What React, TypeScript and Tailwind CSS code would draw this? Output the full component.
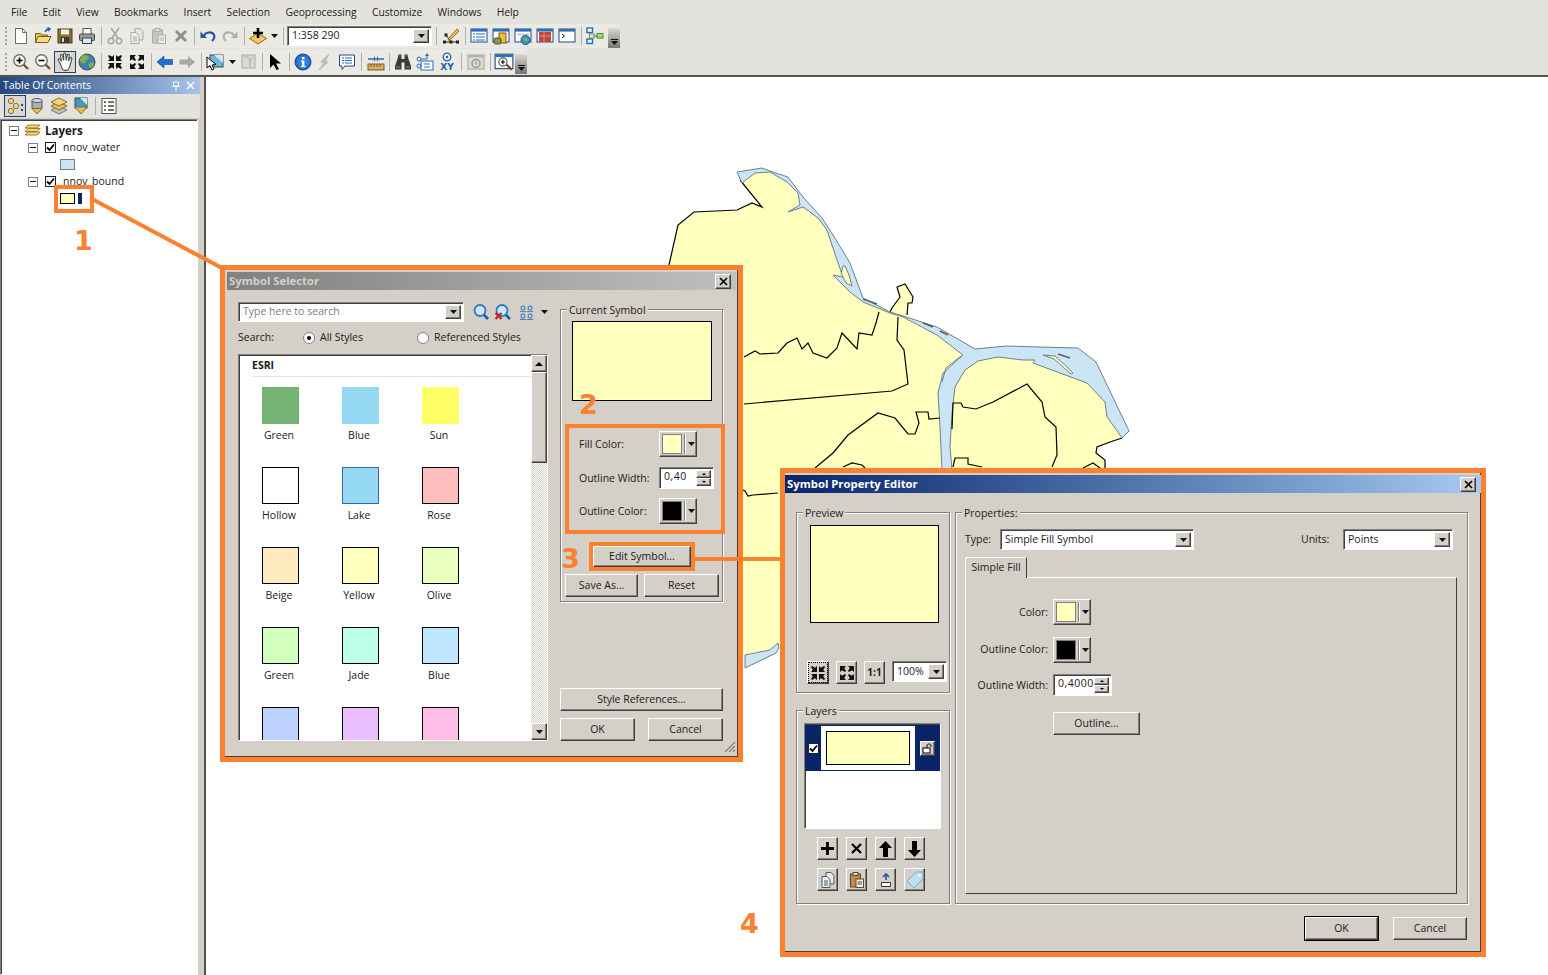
import type { ReactNode } from 'react';

const raised = 'border border-t-white border-l-white border-r-[#404040] border-b-[#404040] shadow-[inset_-1px_-1px_0_#808080]';
const sunken = 'border border-t-[#808080] border-l-[#808080] border-r-white border-b-white shadow-[inset_1px_1px_0_#404040]';

const Svg = ({ children, size = 18 }: { children: ReactNode; size?: number }) => (
  <svg width={size} height={size} viewBox="0 0 18 18" fill="none">{children}</svg>
);

const Caret = () => (
  <svg className="shrink-0" width="7" height="4" viewBox="0 0 7 4"><polygon points="0,0 7,0 3.5,4" fill="#111" /></svg>
);

// toolbar icons
const DocIcon = () => <Svg><path d="M3.5 1.5h7l4 4v11h-11z" fill="#fff" stroke="#6b6b6b" /><path d="M10.5 1.5v4h4" stroke="#6b6b6b" /></Svg>;
const OpenIcon = () => <Svg><path d="M1.5 6.5h5l1 1.5h6v7.5h-12z" fill="#e9c35c" stroke="#7c5d12" /><path d="M1.5 15.5l2.5-6h13l-3 6z" fill="#f5da84" stroke="#7c5d12" /><path d="M11 5c1-2.5 2.5-3 4-3M13.5 0.5l2.5 1.5-2 2" stroke="#245fa8" strokeWidth="1.5" /></Svg>;
const SaveIcon = () => <Svg><rect x="2" y="2" width="14" height="14" fill="#8a7130" stroke="#4b3c14" /><rect x="5" y="2.5" width="8" height="5" fill="#f2efe3" /><rect x="4.5" y="10" width="9" height="6" fill="#3d3a33" /><rect x="6" y="11" width="2" height="4" fill="#d8d8d8" /></Svg>;
const PrintIcon = () => <Svg><rect x="5" y="1.5" width="8" height="6" fill="#fff" stroke="#555" /><rect x="1.5" y="7" width="15" height="6.5" rx="1" fill="#9a9a9a" stroke="#444" /><rect x="4.5" y="11" width="9" height="5.5" fill="#dceaf7" stroke="#345" /></Svg>;
const CutIcon = () => <Svg><path d="M5 1l7 10M13 1L6 11" stroke="#a6a6a2" strokeWidth="1.6" /><circle cx="5" cy="14" r="2.7" stroke="#a6a6a2" strokeWidth="1.5" /><circle cx="13" cy="14" r="2.7" stroke="#a6a6a2" strokeWidth="1.5" /></Svg>;
const CopyIcon = ({ color = '#a9a9a5' }: { color?: string }) => <Svg><path d="M7 1.5h5l3 3v8.5H7z" fill="#e8e6e1" stroke={color} /><path d="M3 5.5h5l3 3v8H3z" fill="#f1f0ec" stroke={color} /><path d="M5 10h4M5 12h4M5 14h4" stroke={color} /></Svg>;
const PasteIcon = ({ color = '#a9a9a5', board = '#c9c7c2' }: { color?: string; board?: string }) => <Svg><rect x="2.5" y="3" width="10" height="13" fill={board} stroke={color} /><rect x="5" y="1.5" width="5" height="3" fill="#e0ded9" stroke={color} /><rect x="8" y="8" width="7.5" height="8.5" fill="#f1f0ec" stroke={color} /><path d="M9.5 11h4.5M9.5 13h4.5" stroke={color} /></Svg>;
const DelIcon = () => <Svg><path d="M4 4l10 10M14 4L4 14" stroke="#8f8f8c" strokeWidth="3" /></Svg>;
const UndoIcon = () => <Svg><path d="M5 9c1-4 8-5 10-1 1 2 0 4-2 6" stroke="#1f5aa6" strokeWidth="2.2" /><polygon points="1.5,4.5 8,11 1.5,11" fill="#1f5aa6" /></Svg>;
const RedoIcon = () => <Svg><path d="M13 9c-1-4-8-5-10-1-1 2 0 4 2 6" stroke="#b0b0ac" strokeWidth="2.2" /><polygon points="16.5,4.5 10,11 16.5,11" fill="#b0b0ac" /></Svg>;
const AddDataIcon = () => <Svg><polygon points="9,6 17.5,11.5 9,17 0.5,11.5" fill="#efc765" stroke="#8a6a1d" /><path d="M9 1v10M4 6h10" stroke="#000" strokeWidth="2.6" /></Svg>;
const EditorIcon = () => <Svg><path d="M2 15h14M9 15L4 8" stroke="#222" /><rect x="1" y="13.5" width="3" height="3" fill="#222" /><rect x="7.5" y="13.5" width="3" height="3" fill="#222" /><rect x="14" y="13.5" width="3" height="3" fill="#222" /><rect x="2.5" y="6.5" width="3" height="3" fill="#222" /><path d="M7 11l8-9 2 2-8 8-3 1z" fill="#f1c25b" stroke="#9a6a12" /></Svg>;
const WindowBase = ({ children }: { children?: ReactNode }) => <><rect x="1" y="2" width="16" height="13" fill="#fff" stroke="#1d4a86" /><rect x="1" y="2" width="16" height="2.6" fill="#2d6fb8" /><>{children}</></>;
const TocWin = () => <Svg><WindowBase><path d="M3 7h2M6 7h9M3 10h2M6 10h9M3 13h2M6 13h9" stroke="#2b6cb8" /></WindowBase></Svg>;
const CatalogWin = () => <Svg><WindowBase><rect x="7" y="6" width="7" height="10" fill="#f0c030" stroke="#7c5d12" /><rect x="2" y="11" width="7" height="6" rx="2" fill="#8f9c3a" stroke="#445" /></WindowBase></Svg>;
const SearchWin = () => <Svg><WindowBase><rect x="3" y="6.5" width="12" height="2" fill="#c9c9c9" /><circle cx="11.5" cy="13" r="4.5" fill="#3d8ec9" stroke="#23577d" /><path d="M9 12c1.5-2 3-1 4 0s1 2-1 3z" fill="#6dbb4a" /></WindowBase></Svg>;
const BoxWin = () => <Svg><WindowBase><rect x="3" y="5" width="12" height="10" fill="#c0453a" /><path d="M3 9h12M8 5v10" stroke="#e88f85" /></WindowBase></Svg>;
const CmdWin = () => <Svg><WindowBase><path d="M4 7l2.5 2L4 11" stroke="#111" /></WindowBase></Svg>;
const ModelIcon = () => <Svg><rect x="1" y="1" width="5.5" height="4.5" fill="#ffd" stroke="#1d6fb8" strokeWidth="1.4" /><rect x="1" y="12" width="5.5" height="4.5" fill="#dff" stroke="#1d6fb8" strokeWidth="1.4" /><rect x="3.5" y="7" width="4.5" height="4" fill="#ee9" stroke="#888" /><rect x="11" y="6.5" width="6" height="4.5" fill="#9fdc6c" stroke="#4d8a25" /><path d="M3.7 5.5V7M3.7 11v1M8 9h3" stroke="#1d6fb8" /></Svg>;
const ZoomGlass = ({ plus }: { plus: boolean }) => <Svg><path d="M11 11l5 5" stroke="#8a4a2a" strokeWidth="2.4" /><circle cx="7.5" cy="7.5" r="5.7" fill="#fff" stroke="#6b6b6b" strokeWidth="1.4" /><path d="M4.5 7.5h6" stroke="#000" strokeWidth="1.6" />{plus && <path d="M7.5 4.5v6" stroke="#000" strokeWidth="1.6" />}</Svg>;
const HandIcon = () => <Svg size={20}><path d="M5 11L3 7.5c-.7-1.2.8-2 1.6-.9L6 8.5 4.8 3.5c-.3-1.3 1.4-1.7 1.8-.5l1.2 4.5L7.8 2c0-1.4 1.8-1.4 1.9 0l.4 5.5 1-4.6c.3-1.3 1.9-1 1.7.3l-.7 5 1.4-2.7c.6-1.1 2-.4 1.6.8L13.5 12c-.5 2-1 4.5-3 4.500H8c-1.500 0-2-3-3-5.500z" fill="#fff" stroke="#4a4a4a" /></Svg>;
const GlobeIcon = () => <Svg><circle cx="9" cy="9" r="8" fill="#3d7fb8" stroke="#4a4a4a" /><path d="M6 2c3 0 5 1 5 3S8 6 8 8s-3 3-4 2-3-2-2-4 2-4 4-4zM11 10c2-1 5-1 5 1s-3 5-4 4-2-4-1-5z" fill="#7fb04a" /></Svg>;
const ArrowsIn = () => <Svg><polygon points="2,2 8,2 6.2,4 8,7 7,8 4,6.2 2,8" fill="#111" transform="rotate(180 5 5)" /><polygon points="16,2 10,2 11.8,4 10,7 11,8 14,6.2 16,8" fill="#111" transform="rotate(180 13 5)" /><polygon points="2,16 8,16 6.2,14 8,11 7,10 4,11.8 2,10" fill="#111" transform="rotate(180 5 13)" /><polygon points="16,16 10,16 11.8,14 10,11 11,10 14,11.8 16,10" fill="#111" transform="rotate(180 13 13)" /></Svg>;
const ArrowsOut = () => <Svg><polygon points="2,2 8,2 6.2,4 8,7 7,8 4,6.2 2,8" fill="#111" /><polygon points="16,2 10,2 11.8,4 10,7 11,8 14,6.2 16,8" fill="#111" /><polygon points="2,16 8,16 6.2,14 8,11 7,10 4,11.8 2,10" fill="#111" /><polygon points="16,16 10,16 11.8,14 10,11 11,10 14,11.8 16,10" fill="#111" /></Svg>;
const BackIcon = () => <Svg><polygon points="1,9 8,3 8,6.5 16.5,6.5 16.5,11.5 8,11.5 8,15" fill="#1f6fd0" stroke="#16488a" strokeWidth=".6" /></Svg>;
const ForwardIcon = () => <Svg><polygon points="17,9 10,3 10,6.5 1.5,6.5 1.5,11.5 10,11.5 10,15" fill="#a8a8a4" /></Svg>;
const SelectIcon = () => <Svg><rect x="4" y="2" width="13" height="12" fill="#6ab8d8" stroke="#444" /><path d="M8 2l9 8V2z" fill="#cfe8f2" /><polygon points="1,4 1,15 4,12.5 6,17 8,16 6,12 10,11.5" fill="#fff" stroke="#000" /></Svg>;
const SelectGrey = () => <Svg><rect x="2" y="2" width="13" height="13" fill="#dcdad5" stroke="#aaa" /><path d="M4 4h4l2 4 3-4M10 8v6" stroke="#aaa" /></Svg>;
const PointerIcon = () => <Svg><polygon points="3,1 3,15 6.5,11.5 9.5,17 12,16 9,10.5 14,10.5" fill="#000" /></Svg>;
const InfoIcon = () => <Svg><circle cx="9" cy="9" r="8" fill="#2069c4" stroke="#174a8c" /><circle cx="9" cy="9" r="6" fill="#2f80de" /><rect x="8" y="4" width="2.4" height="2.2" fill="#fff" /><path d="M7 7.5h3.4V13h1.2v1.2H6.8V13H8V8.7H7z" fill="#fff" /></Svg>;
const BoltIcon = () => <Svg><path d="M13 1L5 9l3 .5L3 17l9-8-3-.5z" fill="#c2c0bb" stroke="#a8a6a1" strokeWidth=".6" /></Svg>;
const PopupIcon = () => <Svg><path d="M1.5 2h15v11H7l-3 3.5V13H1.5z" fill="#fff" stroke="#1d4a86" /><path d="M4 5h2M7 5h7M4 7.5h2M7 7.5h7M4 10h2M7 10h7" stroke="#2b6cb8" /></Svg>;
const MeasureIcon = () => <Svg><rect x="1" y="11" width="16" height="6" fill="#d9b066" stroke="#7d5c20" /><path d="M4 11v3M7 11v3M10 11v3M13 11v3" stroke="#7d5c20" /><path d="M1 6h6M11 6h6" stroke="#1d6fb8" strokeWidth="1.6" /><polygon points="7,3 7,9 9,6" fill="#1d6fb8" /><polygon points="11,3 11,9 9,6" fill="#1d6fb8" /></Svg>;
const BinocularsIcon = () => <Svg><path d="M4.500 1.500h3v4.500h3V1.500h3L14.500 6l2.500 7v3.500h-6.500V9.500h-3v7H1V13l2.500-7z" fill="#3a3a3a" /><path d="M2 14h4M12 14h4" stroke="#8a8a8a" /><path d="M5 3h1.500M11.500 3H13" stroke="#8a8a8a" /></Svg>;
const RouteIcon = () => <Svg><rect x="5" y="8" width="12" height="9" fill="#fff" stroke="#2b6cb8" /><path d="M8 11h6M8 14h6" stroke="#2b6cb8" /><circle cx="3" cy="6" r="2" stroke="#2b6cb8" /><circle cx="3" cy="13" r="2" stroke="#2b6cb8" /><path d="M5 6h6V2" stroke="#2b6cb8" /><polygon points="9,3 13,3 11,0" fill="#2b6cb8" /></Svg>;
const XYIcon = () => (
  <svg width="18" height="20" viewBox="0 0 18 20" fill="none">
    <circle cx="9" cy="5" r="3.8" stroke="#1d5fa8" strokeWidth="1.3" /><circle cx="9" cy="5" r="1.2" fill="#1d5fa8" />
    <text x="9" y="18" textAnchor="middle" fontSize="9" fontWeight="700" fontFamily="'DejaVu Sans', sans-serif" fill="#1d5fa8">XY</text>
  </svg>
);
const TimeIcon = () => <Svg><rect x="1" y="2" width="16" height="14" fill="#dedcd7" stroke="#a5a3a0" /><rect x="1" y="2" width="16" height="2.4" fill="#b5b3ae" /><circle cx="9" cy="10.5" r="4" stroke="#9a9894" strokeWidth="1.4" /><path d="M9 8v3h2" stroke="#9a9894" /></Svg>;
const MagWindow = () => <Svg size={20}><WindowBase><path d="M11 11l5 5" stroke="#8a3a3a" strokeWidth="2" /><circle cx="8" cy="9" r="3.7" fill="#fff" stroke="#555" /><path d="M6 9h4M8 7v4" stroke="#000" /></WindowBase></Svg>;
const OrderIcon = () => <Svg><circle cx="5" cy="4" r="2.6" fill="#f3d68a" stroke="#87702c" /><circle cx="10" cy="9" r="2.6" fill="#f3d68a" stroke="#87702c" /><circle cx="5" cy="14" r="2.6" fill="#f3d68a" stroke="#87702c" /><path d="M15 7h2v2h-2zM15 12h2v2h-2z" fill="#444" /></Svg>;
const SourceIcon = () => <Svg><path d="M4 3.500v8h10v-8" fill="#a5afba" stroke="#555" /><ellipse cx="9" cy="3.500" rx="5" ry="2" fill="#d5dbe2" stroke="#555" /><polygon points="4,11.500 14,11.500 9,17" fill="#e9bd5c" stroke="#8a6a1d" /></Svg>;
const LayersMiniIcon = () => <Svg><polygon points="9,9 17,13 9,17 1,13" fill="#c5c3be" stroke="#777" /><polygon points="9,5 17,9 9,13 1,9" fill="#e9bd5c" stroke="#8a6a1d" /><polygon points="9,1 17,5 9,9 1,5" fill="#efd58c" stroke="#8a6a1d" /></Svg>;
const SelectionIcon = () => <Svg><rect x="3" y="1" width="12" height="10" fill="#3d9ac8" stroke="#444" /><path d="M8 1h7v7z" fill="#cfe8f2" /><polygon points="3,10 15,10 9,17" fill="#e9bd5c" stroke="#8a6a1d" /></Svg>;
const OptionsIcon = () => <Svg><rect x="2" y="1.5" width="14" height="15" fill="#fff" stroke="#555" /><path d="M4 5h2M8 5h6M4 9h2M8 9h6M4 13h2M8 13h6" stroke="#444" strokeWidth="1.3" /></Svg>;
const LayersIcon = () => <svg width="17" height="14" viewBox="0 0 17 14" fill="none"><path d="M4 1h12l-3 3H1zM4 4.5h12l-3 3H1zM4 8h12l-3 3H1z" fill="#efd58c" stroke="#a47c1e" /></svg>;
const SearchIcon = ({ clear }: { clear?: boolean }) => (
  <svg width="18" height="18" viewBox="0 0 18 18" fill="none">
    <path d="M11.500 11.500L16 16" stroke="#1f5aa6" strokeWidth="2.600" />
    <circle cx="8" cy="7.500" r="5.500" fill="#cfe6f7" stroke="#2f78c4" strokeWidth="1.800" />
    {clear && <path d="M1.500 10l6 6M7.500 10l-6 6" stroke="#c22222" strokeWidth="2.200" />}
  </svg>
);

const Sep = ({ w = 6 }: { w?: number }) => (
  <div className="flex justify-center shrink-0" style={{ width: w }}><div className="w-px h-[18px] bg-[#b2b0ab]" /></div>
);
const Slot = ({ children, active }: { children: ReactNode; active?: boolean }) => (
  <div className={`w-[22px] h-[22px] flex items-center justify-center shrink-0 ${active ? 'border border-[#1f3f6e] bg-[#d9d8d4]' : ''}`}>{children}</div>
);
const Grip = () => (
  <div className="w-[2px] h-[18px] ml-[5px] mr-[3px] bg-[repeating-linear-gradient(#a5a39e_0_2px,transparent_2px_4px)]" />
);
const Overflow = () => (
  <div className="ml-auto self-end h-[20px] w-[12px] bg-gradient-to-b from-[#dcdad6] to-[#77756f] flex flex-col items-center justify-end pb-[3px] gap-px">
    <div className="w-[7px] h-px bg-[#111]" /><Caret />
  </div>
);

const Tree = ({ indent = 9, children }: { indent?: number; children: ReactNode }) => (
  <div className="h-[17px] flex items-center" style={{ paddingLeft: indent }}>{children}</div>
);
const Minus = () => (
  <div className="w-[10px] h-[10px] border border-[#808080] bg-white flex items-center justify-center shrink-0"><div className="w-[6px] h-px bg-[#111]" /></div>
);
const Check = ({ className = '' }: { className?: string }) => (
  <div className={`w-[11px] h-[11px] border border-[#222] bg-white flex items-center justify-center shrink-0 ${className}`}>
    <svg width="9" height="9" viewBox="0 0 9 9" fill="none"><path d="M1 4.5l2.5 2.5L8 1.5" stroke="#000" strokeWidth="1.8" /></svg>
  </div>
);

const Btn = ({ className = '', children }: { className?: string; children: ReactNode }) => (
  <div className={`bg-[#d4d0c8] flex items-center justify-center shrink-0 ${raised} ${className}`}>{children}</div>
);
const Combo = ({ className = '', text, muted }: { className?: string; text: string; muted?: boolean }) => (
  <div className={`bg-white flex items-center shrink-0 p-[2px] ${sunken} ${className}`}>
    <span className={`flex-1 pl-[2px] truncate ${muted ? 'text-[#7d7d7d]' : ''}`}>{text}</span>
    <Btn className="w-[16px] h-full"><Caret /></Btn>
  </div>
);
const Group = ({ title, className = '', children }: { title: string; className?: string; children: ReactNode }) => (
  <div className={`relative border border-[#808080] shadow-[1px_1px_0_#fff,inset_1px_1px_0_#fff] ${className}`}>
    <span className="absolute -top-[7px] left-[6px] bg-[#d4d0c8] px-[2px] leading-[14px]">{title}</span>
    {children}
  </div>
);
const ColorBtn = ({ color }: { color: string }) => (
  <Btn className="w-[38px] h-[26px] pl-[2px] pr-[1px] gap-[2px]">
    <div className="w-[20px] h-[20px] border border-[#808080] shrink-0" style={{ background: color }} />
    <div className="w-[2px] h-[20px] border-l border-[#808080] border-r border-r-white shrink-0" />
    <Caret />
  </Btn>
);
const Spin = ({ className = '', value }: { className?: string; value: string }) => (
  <div className={`bg-white flex items-center shrink-0 p-[2px] ${sunken} ${className}`}>
    <span className="flex-1 pl-[2px] pb-[2px] tracking-[0.5px]">{value}</span>
    <div className="flex flex-col h-full w-[15px]">
      <Btn className="flex-1 w-full"><div className="w-0 h-0 border-x-[2px] border-x-transparent border-b-[2px] border-b-black" /></Btn>
      <Btn className="flex-1 w-full"><div className="w-0 h-0 border-x-[2px] border-x-transparent border-t-[2px] border-t-black" /></Btn>
    </div>
  </div>
);
const CloseBtn = () => (
  <Btn className="w-[16px] h-[15px]">
    <svg width="9" height="9" viewBox="0 0 9 9" fill="none"><path d="M1 1l7 7M8 1L1 8" stroke="#000" strokeWidth="1.7" /></svg>
  </Btn>
);
const Radio = ({ on }: { on?: boolean }) => (
  <div className="w-[12px] h-[12px] rounded-full bg-white border border-[#808080] flex items-center justify-center shrink-0">
    {on && <div className="w-[4px] h-[4px] rounded-full bg-black" />}
  </div>
);
const Num = ({ className, children }: { className: string; children: ReactNode }) => (
  <span className={`absolute font-['DejaVu_Sans',sans-serif] font-bold text-[27px] leading-none text-[#fb8130] ${className}`}>{children}</span>
);

const symbols = [
  { name: 'Green', color: '#75b375', border: '#75b375' },
  { name: 'Blue', color: '#95d9f2', border: '#95d9f2' },
  { name: 'Sun', color: '#ffff66', border: '#ffff66' },
  { name: 'Hollow', color: '#ffffff', border: '#000000' },
  { name: 'Lake', color: '#95d9f2', border: '#3a62b5' },
  { name: 'Rose', color: '#ffbebe', border: '#000000' },
  { name: 'Beige', color: '#ffe9bf', border: '#000000' },
  { name: 'Yellow', color: '#ffffbe', border: '#000000' },
  { name: 'Olive', color: '#e9ffbe', border: '#000000' },
  { name: 'Green', color: '#d3ffbe', border: '#000000' },
  { name: 'Jade', color: '#beffe8', border: '#000000' },
  { name: 'Blue', color: '#bee6ff', border: '#000000' },
  { name: '', color: '#bed2ff', border: '#000000' },
  { name: '', color: '#e8beff', border: '#000000' },
  { name: '', color: '#ffbee8', border: '#000000' },
];

function MapView() {
  return (
    <svg className="w-full h-full block" viewBox="206 77 1342 898">
      <path d="M669 265L678 225L694 212L737 210L752 203L762 207L740 180L737 172L762 168L770 171L788 177L803 197L822 218L833 235L850 263L863 298L890 312L892 308L900 297L897 287L905 284L913 297L912 303L908 303L907 315L937 327L975 349L1007 346L1040 347L1078 348L1096 362L1129 431L1122 438L1110 442L1097 447L1096 453L1105 460L1105 600L780 645L745 658L669 658Z" fill="#ffffbe" />
      <g fill="none" stroke="#000" strokeWidth="1.2">
        <path d="M669 265L678 225L694 212L737 210L752 203L762 207L740 180" />
        <path d="M890 312L892 308L900 297L897 287L905 284L913 297L912 303L908 303L907 315" />
        <path d="M1122 438L1110 442L1097 447L1096 453L1105 460L1105 470" />
      </g>
      <path d="M737 172L762 168L770 171L788 177L803 197L822 218L833 235L850 263L863 298L890 312L903 316L937 327L975 349L1007 346L1040 347L1078 348L1096 362L1129 431L1122 438L1113 425L1107 417L1105 402L1087 383L1033 363L1035 360L1023 360L998 357L978 361L965 370L955 387L952 413L950 447L952 470L942 470L940 427L938 393L943 373L963 355L937 335L903 317L890 313L863 302L850 292L833 275L843 277L837 260L827 230L818 218L803 207L788 212L800 205L798 193L787 182L770 172L755 173L742 183Z" fill="#cce5f5" stroke="#6d7f8f" />
      <path d="M843 266L845 266L849 275L852 286L846 283L841 273Z" fill="#ffffbe" stroke="#6d7f8f" />
      <path d="M1043 355L1055 356L1066 366L1073 373L1071 374L1062 366L1054 359Z" fill="#ffffbe" stroke="#6d7f8f" />
      <path d="M942 382L946 368L961 356" fill="none" stroke="#6d7f8f" />
      <path d="M863 299L877 304M923 323L933 327M940 331L948 335M1058 354L1070 358" fill="none" stroke="#55606a" strokeWidth="1.500" />
      <path d="M745 655L770 650L778 643L779 648L776 653L745 668Z" fill="#cce5f5" stroke="#6d7f8f" />
      <g fill="none" stroke="#000" strokeWidth="1.2">
        <path d="M744 357L755 351L760 354L778 353L787 343L797 338L802 349L808 343L813 353L827 358L837 348L842 333L857 349L859 333L872 335L876 323L879 312" />
        <path d="M744 404L892 391L908 384L904 350L897 340L898 317" />
        <path d="M815 468L833 453L848 435L878 413L895 418L908 434L915 434L919 423L916 412L928 412L929 419L940 418" />
        <path d="M952 429L953 403L961 403L963 407L976 409L993 402L1027 384L1042 402L1045 417L1056 427L1057 455L1052 467" />
        <path d="M953 467L955 458L968 458L968 464L982 467" />
        <path d="M843 467L852 463L862 465L865 468" />
        <path d="M1083 468L1093 463L1100 468" />
        <path d="M738 488L745 491L748 496L753 495L778 493" />
      </g>
    </svg>
  );
}

function SymbolSelector() {
  return (
    <div className="absolute left-[220px] top-[265px] w-[523px] h-[497px] border-[5px] border-[#fb8130] bg-[#d4d0c8] shadow-[inset_-1px_-1px_0_#404040]">
      <div className="mt-[2px] mx-[2px] h-[18px] bg-gradient-to-r from-[#808080] to-[#c0c0c0] flex items-center justify-between pl-[2px] pr-[5px]">
        <span className="font-bold text-[11.3px] text-[#d4d0c8]">Symbol Selector</span>
        <CloseBtn />
      </div>
      <div className="flex pl-[13px] gap-[12px]">
        <div className="w-[310px] shrink-0 pt-[12px]">
          <div className="flex items-center">
            <Combo className="w-[226px] h-[20px]" text="Type here to search" muted />
            <div className="ml-[8px]"><SearchIcon /></div>
            <div className="ml-[4px]"><SearchIcon clear /></div>
            <svg className="ml-[7px]" width="17" height="17" viewBox="0 0 17 17" fill="none">
              <path d="M2.500 1.500h4v4h-4zM10.500 1.500h4v4h-4zM2.500 10.500h4v4h-4zM10.500 10.500h4v4h-4zM1 7.500h7M9 7.500h7M1 16.500h7M9 16.500h7" stroke="#2b6cb8" />
            </svg>
            <div className="ml-[7px]"><Caret /></div>
          </div>
          <div className="flex items-center h-[20px] mt-[6px]">
            <span className="w-[65px]">Search:</span>
            <Radio on />
            <span className="ml-[5px] w-[97px]">All Styles</span>
            <Radio />
            <span className="ml-[5px]">Referenced Styles</span>
          </div>
          <div className={`mt-[6px] h-[387px] w-[310px] flex bg-white overflow-hidden ${sunken}`}>
            <div className="flex-1 overflow-hidden">
              <div className="h-[22px] ml-[13px] font-bold flex items-center border-b border-[#dbe6ee]">ESRI</div>
              <div className="grid grid-cols-[80px_80px_80px] mt-[10px] pl-[1px]">
                {symbols.map((s, i) => (
                  <div key={i} className="h-[80px] flex flex-col items-center">
                    <div className="w-[37px] h-[37px] border shrink-0" style={{ background: s.color, borderColor: s.border }} />
                    {s.name && <span className="mt-[4px] pr-[2px] leading-[14px]">{s.name}</span>}
                  </div>
                ))}
              </div>
            </div>
            <div className="w-[16px] flex flex-col bg-[repeating-conic-gradient(#d4d0c8_0_25%,#fff_0_50%)] bg-[length:2px_2px]">
              <Btn className="h-[17px]"><div className="w-0 h-0 border-x-[4px] border-x-transparent border-b-[4px] border-b-black" /></Btn>
              <div className={`h-[91px] bg-[#d4d0c8] ${raised}`} />
              <Btn className="h-[17px] mt-auto"><Caret /></Btn>
            </div>
          </div>
        </div>
        <div className="w-[163px] h-[432px] mt-[19px] flex flex-col">
          <Group title="Current Symbol" className="h-[293px] shrink-0">
            <div className="w-[140px] h-[80px] ml-[11px] mt-[11px] bg-[#ffffbe] border border-black" />
            <div className="w-[160px] h-[110px] ml-[4px] mt-[23px] border-[4px] border-[#fb8130] flex flex-col pl-[10px] pr-[7px]">
              <div className="flex items-center justify-between h-[26px] mt-[3px]"><span className="mt-[2px]">Fill Color:</span><div className="mr-[17px]"><ColorBtn color="#ffffbe" /></div></div>
              <div className="flex items-center justify-between h-[22px] mt-[10px]"><span className="mt-[2px]">Outline Width:</span><Spin className="w-[55px] h-[22px]" value="0,40" /></div>
              <div className="flex items-center justify-between h-[26px] mt-[9px]"><span className="mt-[2px]">Outline Color:</span><div className="mr-[17px]"><ColorBtn color="#000000" /></div></div>
            </div>
            <div className="w-[106px] h-[29px] ml-[28px] mt-[8px] border-[4px] border-[#fb8130]">
              <Btn className="w-full h-full">Edit Symbol...</Btn>
            </div>
            <div className="flex ml-[4px] mt-[3px] gap-[6px]">
              <Btn className="w-[73px] h-[23px]">Save As...</Btn>
              <Btn className="w-[75px] h-[23px]">Reset</Btn>
            </div>
          </Group>
          <Btn className="w-full h-[23px] mt-auto">Style References...</Btn>
          <div className="flex justify-between mt-[7px]">
            <Btn className="w-[75px] h-[23px]">OK</Btn>
            <Btn className="w-[75px] h-[23px]">Cancel</Btn>
          </div>
        </div>
      </div>
      <svg className="absolute right-[2px] bottom-[4px]" width="13" height="13" viewBox="0 0 13 13" fill="none">
        <path d="M12 2L2 12M12 6l-6 6M12 10l-2 2" stroke="#808080" strokeWidth="1.2" />
      </svg>
    </div>
  );
}

function SymbolEditor() {
  const row1 = [
    <svg key="a" width="15" height="15" viewBox="0 0 15 15"><path d="M1 7.500h13M7.500 1v13" stroke="#000" strokeWidth="2.800" /></svg>,
    <svg key="b" width="11" height="11" viewBox="0 0 11 11"><path d="M1 1l9 9M10 1L1 10" stroke="#000" strokeWidth="2.200" /></svg>,
    <svg key="c" width="15" height="16" viewBox="0 0 15 16"><polygon points="7.500,0 14,7 10,7 10,16 5,16 5,7 1,7" fill="#000" /></svg>,
    <svg key="d" width="15" height="16" viewBox="0 0 15 16"><polygon points="7.500,16 14,9 10,9 10,0 5,0 5,9 1,9" fill="#000" /></svg>,
  ];
  const row2 = [
    <CopyIcon key="a" color="#4a5a6a" />,
    <PasteIcon key="b" color="#5a4a2a" board="#c68a4a" />,
    <svg key="c" width="14" height="16" viewBox="0 0 14 16" fill="none"><path d="M7 8V3M4 5l3-3 3 3" stroke="#1f5aa6" strokeWidth="1.600" /><path d="M2.500 10.500h9v4h-9z" fill="#fff" stroke="#333" /></svg>,
    <svg key="d" width="18" height="18" viewBox="0 0 18 18"><path d="M10 1h7v7l-9 9-7-7z" fill="#bcdff2" stroke="#7fa9c4" /><circle cx="13.500" cy="4.500" r="1.200" fill="#fff" /></svg>,
  ];
  return (
    <div className="absolute left-[780px] top-[468px] w-[706px] h-[489px] border-[5px] border-[#fb8130] bg-[#d4d0c8] shadow-[inset_-1px_-1px_0_#404040]">
      <div className="mt-[2px] h-[18px] bg-gradient-to-r from-[#0a246a] to-[#a6caf0] flex items-center justify-between pl-[2px] pr-[5px]">
        <span className="font-bold text-[11.3px] text-white">Symbol Property Editor</span>
        <CloseBtn />
      </div>
      <div className="flex mt-[19px] pl-[11px] gap-[5px]">
        <div className="w-[154px] shrink-0 flex flex-col gap-[17px]">
          <Group title="Preview" className="h-[181px]">
            <div className="w-[129px] h-[98px] ml-[13px] mt-[12px] bg-[#ffffbe] border border-black" />
            <div className="flex items-start ml-[10px] mt-[38px]">
              <Btn className="w-[22px] h-[23px] outline-1 outline-dotted outline-black -outline-offset-2"><ArrowsIn /></Btn>
              <Btn className="w-[21px] h-[23px] ml-[7px]"><ArrowsOut /></Btn>
              <Btn className="w-[21px] h-[23px] ml-[7px] font-bold text-[10px]">1:1</Btn>
              <Combo className="w-[55px] h-[21px] ml-[7px]" text="100%" />
            </div>
          </Group>
          <Group title="Layers" className="h-[194px]">
            <div className={`w-[137px] h-[106px] ml-[7px] mt-[12px] bg-white ${sunken}`}>
              <div className="h-[46px] mt-[1px] bg-[#0a246a] flex items-center">
                <Check className="ml-[3px]" />
                <div className="w-[94px] h-[44px] ml-[2px] bg-white p-[5px]">
                  <div className="w-full h-full bg-[#ffffbe] border border-black" />
                </div>
                <Btn className="w-[15px] h-[15px] ml-[5px]">
                  <svg width="11" height="11" viewBox="0 0 11 11" fill="none"><rect x="1" y="5" width="7" height="5" fill="#fff" stroke="#000" /><path d="M5 5V2.500c0-2 4-2 4 0V4" stroke="#000" /></svg>
                </Btn>
              </div>
            </div>
            <div className="grid grid-cols-[21px_21px_21px_21px] gap-x-[8px] gap-y-[8px] ml-[20px] mt-[8px]">
              {row1.concat(row2).map((icon, i) => (
                <Btn key={i} className="w-[21px] h-[23px]">{icon}</Btn>
              ))}
            </div>
          </Group>
        </div>
        <Group title="Properties:" className="w-[513px] h-[392px] px-[9px] pt-[16px] shrink-0">
          <div className="flex items-center h-[21px]">
            <span className="w-[35px]">Type:</span>
            <Combo className="w-[194px] h-[21px]" text="Simple Fill Symbol" />
            <span className="ml-[107px] w-[42px]">Units:</span>
            <Combo className="w-[110px] h-[21px]" text="Points" />
          </div>
          <div className="mt-[7px] w-[62px] h-[21px] flex items-center justify-center border-t border-l border-white border-r border-r-[#404040] rounded-tl-[3px] relative z-10 bg-[#d4d0c8] -mb-px">Simple Fill</div>
          <div className="w-[492px] h-[317px] border border-t-white border-l-white border-r-[#404040] border-b-[#404040] pt-[21px]">
            <div className="grid grid-cols-[82px_auto] justify-start items-center gap-x-[5px]">
              <span className="text-right pt-[2px]">Color:</span><ColorBtn color="#ffffbe" />
              <span className="text-right mt-[12px]">Outline Color:</span><div className="mt-[12px]"><ColorBtn color="#000000" /></div>
              <span className="text-right mt-[13px]">Outline Width:</span><Spin className="w-[59px] h-[22px] mt-[11px]" value="0,4000" />
              <span />
              <Btn className="w-[87px] h-[23px] mt-[16px]">Outline...</Btn>
            </div>
          </div>
        </Group>
      </div>
      <div className="flex justify-end pr-[14px] mt-[13px] gap-[15px]">
        <Btn className="w-[73px] h-[23px] outline outline-1 outline-black">OK</Btn>
        <Btn className="w-[74px] h-[23px]">Cancel</Btn>
      </div>
    </div>
  );
}

export default function App() {
  return (
    <div className="relative w-[1548px] h-[975px] overflow-hidden bg-[#e4e2dd] flex flex-col font-['Open_Sans',sans-serif] text-[10.5px] text-[#1a1a1a]">
      <div className="h-[24px] shrink-0 flex items-center gap-[15.3px] pl-[11px] pt-[1px] text-[10.3px]">
        {['File', 'Edit', 'View', 'Bookmarks', 'Insert', 'Selection', 'Geoprocessing', 'Customize', 'Windows', 'Help'].map(m => (
          <span key={m}>{m}</span>
        ))}
      </div>
      {/* toolbars */}
      <div className="h-[24px] w-[620px] shrink-0 bg-[#ebe9e4] flex items-center">
        <Grip />
        <Slot><DocIcon /></Slot><Slot><OpenIcon /></Slot><Slot><SaveIcon /></Slot><Slot><PrintIcon /></Slot>
        <Sep />
        <Slot><CutIcon /></Slot><Slot><CopyIcon /></Slot><Slot><PasteIcon /></Slot><Slot><DelIcon /></Slot>
        <Sep w={5} />
        <Slot><UndoIcon /></Slot><Slot><RedoIcon /></Slot>
        <Sep w={6} />
        <Slot><AddDataIcon /></Slot>
        <div className="w-[10px] flex justify-center"><Caret /></div>
        <Sep w={8} />
        <Combo className="w-[145px] h-[20px]" text="1:358 290" />
        <Sep w={8} />
        <Slot><EditorIcon /></Slot>
        <Sep w={6} />
        <Slot><TocWin /></Slot><Slot><CatalogWin /></Slot><Slot><SearchWin /></Slot><Slot><BoxWin /></Slot><Slot><CmdWin /></Slot>
        <Sep w={6} />
        <Slot><ModelIcon /></Slot>
        <Overflow />
      </div>
      <div className="h-[25px] w-[527px] mt-px shrink-0 bg-[#ebe9e4] flex items-center">
        <Grip />
        <Slot><ZoomGlass plus /></Slot><Slot><ZoomGlass plus={false} /></Slot><Slot active><HandIcon /></Slot><Slot><GlobeIcon /></Slot>
        <Sep />
        <Slot><ArrowsIn /></Slot><Slot><ArrowsOut /></Slot>
        <Sep />
        <Slot><BackIcon /></Slot><Slot><ForwardIcon /></Slot>
        <Sep />
        <Slot><SelectIcon /></Slot>
        <div className="w-[12px] flex justify-center"><Caret /></div>
        <Slot><SelectGrey /></Slot>
        <Sep w={5} />
        <Slot><PointerIcon /></Slot>
        <Sep w={5} />
        <Slot><InfoIcon /></Slot><Slot><BoltIcon /></Slot><Slot><PopupIcon /></Slot>
        <Sep w={7} />
        <Slot><MeasureIcon /></Slot>
        <Sep w={5} />
        <Slot><BinocularsIcon /></Slot><Slot><RouteIcon /></Slot><Slot><XYIcon /></Slot>
        <Sep w={7} />
        <Slot><TimeIcon /></Slot>
        <Sep w={6} />
        <Slot><MagWindow /></Slot>
        <Overflow />
      </div>
      <div className="h-[2px] mt-px shrink-0 bg-[#55534e]" />
      <div className="flex flex-1 min-h-0">
        <aside className="w-[204px] shrink-0 bg-[#d4d0c8] flex flex-col">
          <div className="w-[200px] h-[17px] shrink-0 bg-gradient-to-r from-[#27477f] to-[#a7c4e8] text-white flex items-center justify-between pl-[3px] pr-[5px]">
            <span>Table Of Contents</span>
            <span className="flex items-center gap-[6px]">
              <svg width="8" height="10" viewBox="0 0 8 10" fill="none"><path d="M1.500 1h5v4h-5zM0 5.500h8M4 6v4" stroke="#fff" /></svg>
              <svg width="9" height="9" viewBox="0 0 9 9" fill="none"><path d="M1 1l7 7M8 1L1 8" stroke="#fff" strokeWidth="1.400" /></svg>
            </span>
          </div>
          <div className="w-[200px] h-[24px] shrink-0 bg-[#e4e2dd] flex items-center pl-[4px]">
            <Slot active><OrderIcon /></Slot><Slot><SourceIcon /></Slot><Slot><LayersMiniIcon /></Slot><Slot><SelectionIcon /></Slot>
            <Sep w={6} />
            <Slot><OptionsIcon /></Slot>
          </div>
          <div className={`w-[198px] flex-1 mt-[1px] bg-white pt-[2px] ${sunken}`}>
            <Tree indent={8}><Minus /><div className="ml-[5px]"><LayersIcon /></div><span className="ml-[4px] font-bold text-[11.5px]">Layers</span></Tree>
            <Tree indent={27}><Minus /><Check className="ml-[7px]" /><span className="ml-[7px]">nnov_water</span></Tree>
            <Tree indent={59}><div className="w-[15px] h-[11px] bg-[#cce5f5] border border-[#6d7f8f]" /></Tree>
            <Tree indent={27}><Minus /><Check className="ml-[7px]" /><span className="ml-[7px]">nnov_bound</span></Tree>
            <Tree indent={59}>
              <div className="w-[15px] h-[11px] bg-[#ffffbe] border border-black" />
              <div className="w-[4px] h-[11px] ml-[3px] bg-[#0a246a]" />
            </Tree>
          </div>
        </aside>
        <main className="flex-1 bg-white border-l-2 border-l-[#55534e]"><MapView /></main>
      </div>

      <SymbolSelector />
      <SymbolEditor />

      {/* annotations */}
      <div className="absolute left-[54px] top-[185px] w-[40px] h-[28px] border-[4px] border-[#fb8130]" />
      <svg className="absolute left-0 top-0 pointer-events-none" width="1548" height="975" fill="none">
        <path d="M92 199L222 268" stroke="#fb8130" strokeWidth="4" />
        <path d="M694 559H781" stroke="#fb8130" strokeWidth="4" />
      </svg>
      <Num className="left-[74px] top-[227px]">1</Num>
      <Num className="left-[579px] top-[391px]">2</Num>
      <Num className="left-[561px] top-[545px]">3</Num>
      <Num className="left-[740px] top-[910px]">4</Num>
    </div>
  );
}
